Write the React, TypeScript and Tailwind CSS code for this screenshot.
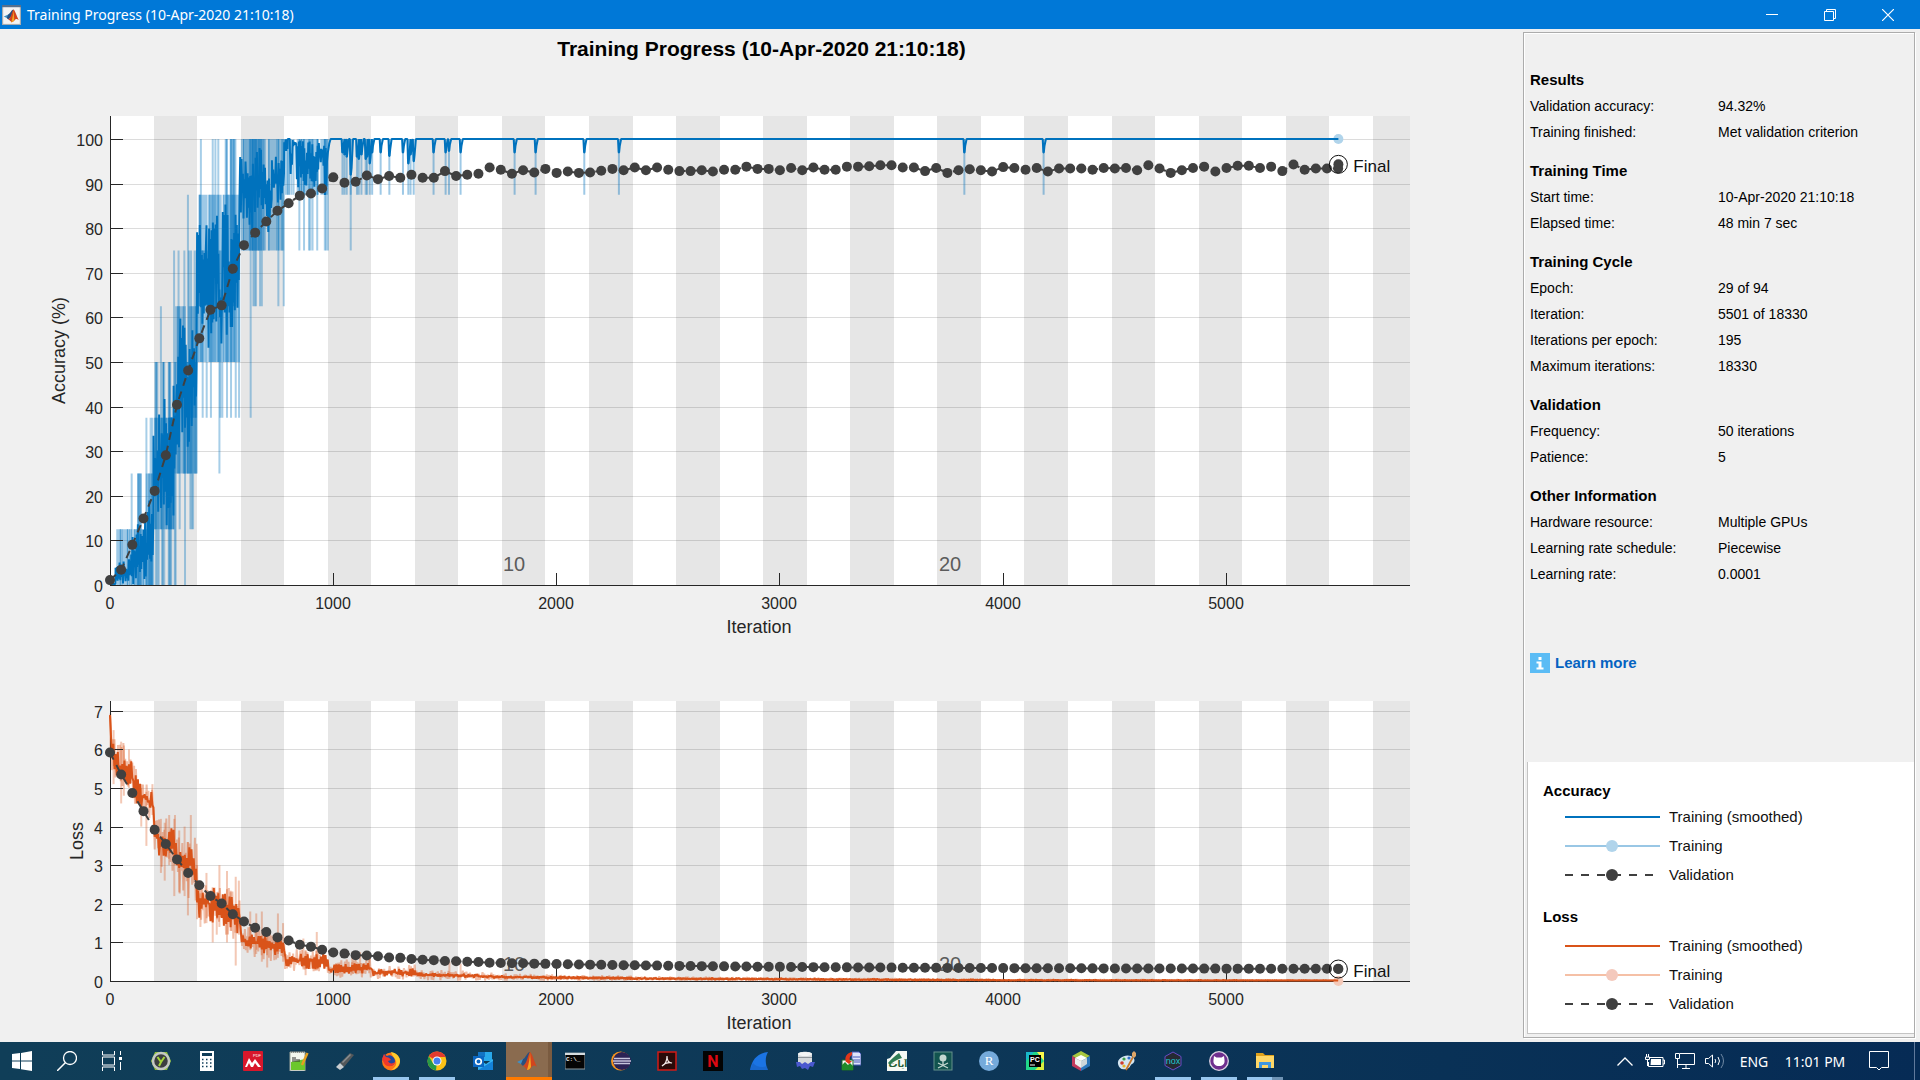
import React from "react";
import type { ReactNode } from "react";

/* ---------- chart geometry ---------- */

const LEFT = 110;
const RIGHT = 1410;
const PX_PER_ITER = 0.2233;
const EPOCH = 195;
const EPOCH_COUNT = 30;

const px = (iteration: number) => LEFT + iteration * PX_PER_ITER;

const ACC = { top: 116, bottom: 585, unit: 4.46 };
const LOSS = { top: 701, bottom: 981, unit: 38.6 };
type Scale = typeof ACC;
const py = (s: Scale, v: number) => s.bottom - v * s.unit;

const toPath = (s: Scale, pts: number[][]) =>
  pts.map(([i, v], k) => `${k ? "L" : "M"}${px(i).toFixed(1)} ${py(s, v).toFixed(1)}`).join("");

const seeded = (seed: number) => () => {
  seed = (seed * 1664525 + 1013904223) % 4294967296;
  return seed / 4294967296;
};

/* ---------- accuracy data ---------- */

const VAL_ACC = [
  1.1, 3.4, 9, 14.9, 21.1, 29.1, 40.4, 48.1, 55.3, 61.7, 62.7, 70.9, 76.2, 79, 81.5, 83.9, 85.6, 87.3, 87.8, 88.9,
  91.4, 90.2, 90.4, 91.8, 91, 91.7, 91.3, 92, 91.3, 91.3, 92.8, 91.7, 92, 92.2, 93.6, 93.1, 92.2, 93, 92.5, 93.3,
  92.4, 92.7, 92.4, 92.5, 92.9, 93.3, 93, 93.6, 93, 93.6, 93.1, 92.8, 92.8, 93, 92.7, 93.1, 93.1, 93.8, 93.3, 93.3,
  93, 93.5, 93, 93.6, 93.1, 93.1, 93.8, 93.8, 93.9, 94.1, 94.1, 93.6, 93.6, 92.8, 93.5, 92.4, 93, 93.2, 93, 92.7,
  93.7, 93.5, 93.1, 93.5, 92.7, 93.4, 93.4, 93.4, 93.1, 93.5, 93.4, 93.5, 93, 94.1, 93.4, 92.4, 93, 93.5, 93.8, 92.7,
  93.5, 94, 94, 93.5, 93.8, 92.8, 94.3, 93.1, 93.4, 93.4, 93.4,
];

/* [first iteration, last iteration, low, high] of the raw mini-batch accuracy */
const RAW_BANDS = [
  [28, 100, 0, 12.5], [104, 195, 0, 12.5], [122, 142, 0, 25], [160, 195, 0, 25], [197, 290, 12.5, 37.5],
  [203, 212, 25, 50], [236, 243, 25, 50], [261, 272, 25, 50], [258, 286, 12.5, 37.5], [292, 340, 25, 62.5],
  [330, 390, 25, 50], [352, 390, 37.5, 62.5], [392, 432, 50, 75], [396, 436, 62.5, 87.5], [438, 500, 50, 87.5],
  [505, 583, 50, 87.5], [518, 528, 62.5, 100], [536, 566, 62.5, 100], [586, 700, 75, 100], [620, 682, 75, 100],
  [706, 780, 75, 100], [784, 806, 87.5, 100], [836, 935, 87.5, 100], [942, 976, 87.5, 100],
];

/* [iteration, low, high] of single mini-batches */
const RAW_SPIKES = [
  [97, 0, 25], [127, 0, 25], [137, 0, 25], [163, 0, 37.5], [182, 0, 37.5], [190, 0, 37.5], [203, 12.5, 50],
  [212, 0, 50], [228, 12.5, 62.5], [236, 0, 50], [243, 0, 50], [263, 0, 50], [270, 0, 50], [205, 0, 37.5],
  [218, 0, 37.5], [234, 0, 37.5], [266, 0, 37.5], [274, 0, 37.5], [290, 0, 50], [294, 0, 50], [287, 25, 75],
  [307, 25, 75], [333, 25, 75], [354, 25, 75], [363, 25, 75], [379, 25, 75], [388, 25, 75], [349, 25, 87.5],
  [312, 12.5, 50], [360, 12.5, 50], [366, 12.5, 50], [372, 12.5, 50], [336, 0, 50], [407, 50, 100], [460, 50, 100],
  [472, 50, 100], [485, 50, 100], [518, 50, 100], [542, 50, 100], [556, 50, 100], [415, 37.5, 75], [433, 37.5, 75],
  [452, 37.5, 75], [494, 37.5, 75], [503, 37.5, 75], [524, 37.5, 75], [542, 37.5, 75], [563, 37.5, 75],
  [578, 37.5, 75], [490, 25, 75], [630, 37.5, 100], [642, 62.5, 100], [648, 62.5, 100], [654, 62.5, 100],
  [672, 62.5, 100], [680, 62.5, 100], [754, 62.5, 100], [778, 62.5, 100], [812, 87.5, 100], [822, 87.5, 100],
  [848, 75, 100], [869, 75, 100], [891, 75, 100], [897, 75, 100], [907, 75, 100], [928, 75, 100], [962, 75, 100],
  [968, 75, 100], [976, 75, 100], [1078, 75, 100],
];

/* late dips to 87.5 %, each with the depth that the smoothed line reaches */
const DIPS = [
  [1041, 97], [1050, 96.5], [1060, 96], [1078, 92], [1106, 96], [1114, 95.5], [1126, 96.5], [1145, 95.5],
  [1151, 96], [1163, 94.5], [1174, 97], [1212, 97], [1251, 96.2], [1312, 97], [1336, 94.5], [1346, 96.5],
  [1360, 95], [1449, 97], [1503, 97], [1518, 97.3], [1570, 97], [1812, 97], [1906, 97], [2124, 97], [2279, 97],
  [3826, 97], [4181, 97],
];

/* [first, last, low, high] range of the smoothed accuracy */
const SMOOTH_RANGES = [
  [0, 25, 0, 0.5], [25, 95, 0, 6], [95, 125, 0, 12], [125, 145, 0, 14], [145, 170, 1, 16], [170, 195, 5, 19],
  [195, 220, 15, 36], [220, 245, 14, 42], [245, 285, 13, 38], [285, 300, 20, 50], [300, 315, 24, 56],
  [315, 345, 33, 61], [345, 370, 31, 58], [370, 390, 37, 55], [390, 405, 59, 87], [405, 432, 56, 78],
  [432, 455, 52, 84], [455, 490, 58, 83], [490, 505, 48, 75], [505, 520, 60, 88], [520, 550, 56, 83],
  [550, 583, 60, 87], [583, 610, 82, 98], [610, 640, 78, 94], [640, 700, 82, 98], [700, 725, 77, 94],
  [725, 780, 84, 98], [780, 796, 97, 100], [796, 806, 100, 100], [806, 818, 92, 98], [818, 834, 98, 100],
  [834, 935, 89, 100], [935, 960, 94, 100], [960, 974, 87, 98],
];

const buildSmoothAcc = () => {
  const rnd = seeded(11);
  const pts: number[][] = [];
  SMOOTH_RANGES.forEach(([a, b, lo, hi]) => {
    for (let i = a, k = 0; i < b; i += 3, k++) {
      const part = k % 2 ? rnd() * 0.45 : 0.55 + rnd() * 0.45;
      pts.push([i, lo + (hi - lo) * part]);
    }
  });
  pts.push([976, 97], [982, 99], [988, 100]);
  DIPS.forEach(([i, v]) => pts.push([i - 4, 100], [i - 1, v], [i + 1, v], [i + 4, v + 1.5], [i + 10, 100]));
  pts.push([5501, 100]);
  return pts.filter((p, k) => k === 0 || p[0] >= pts[k - 1][0]);
};

/* ---------- loss data ---------- */

const VAL_LOSS = [
  5.92, 5.35, 4.87, 4.4, 3.92, 3.55, 3.15, 2.8, 2.48, 2.2, 2.01, 1.73, 1.54, 1.38, 1.27, 1.13, 1.05, 0.94, 0.89,
  0.81, 0.74, 0.71, 0.67, 0.66, 0.64, 0.61, 0.6, 0.57, 0.55, 0.54, 0.52, 0.51, 0.5, 0.49, 0.475, 0.466, 0.46, 0.46,
  ...Array.from({ length: 73 }, (_, k) => 0.31 + 0.14 * Math.exp(-k / 24)),
];

/* [iteration, mean, smoothed spread, raw spread] */
const LOSS_TREND = [
  [0, 6.9, 0.05, 0.05], [8, 5.9, 0.35, 0.5], [30, 5.6, 0.35, 0.7], [70, 5.5, 0.4, 0.7], [95, 5.4, 0.4, 0.7],
  [110, 5.05, 0.4, 0.5], [140, 4.8, 0.35, 0.5], [194, 4.6, 0.35, 0.5], [196, 3.8, 0.45, 0.5], [240, 3.55, 0.45, 0.7],
  [280, 3.5, 0.5, 0.8], [310, 3, 0.5, 0.8], [350, 2.95, 0.45, 0.8], [365, 3.1, 0.5, 1], [389, 2.8, 0.4, 0.8],
  [391, 2.1, 0.45, 0.6], [430, 2.05, 0.5, 0.6], [480, 1.9, 0.45, 0.6], [584, 1.65, 0.45, 0.7],
  [586, 1.08, 0.22, 0.4], [780, 0.85, 0.28, 0.4], [782, 0.55, 0.18, 0.3], [974, 0.5, 0.24, 0.35],
  [976, 0.3, 0.12, 0.2], [1170, 0.33, 0.15, 0.3], [1172, 0.2, 0.09, 0.16], [1365, 0.23, 0.11, 0.2],
  [1367, 0.16, 0.06, 0.14], [1570, 0.14, 0.05, 0.13], [1800, 0.1, 0.04, 0.09], [2500, 0.06, 0.03, 0.06],
  [4000, 0.02, 0.02, 0.03], [5501, 0.01, 0.01, 0.02],
];

const LOSS_SPIKES = [
  [2, 5.9, 6.93], [16, 5.1, 6.5], [50, 4.6, 6.2], [62, 4.8, 6.1], [85, 5, 6], [140, 4, 5.1], [163, 3.5, 4.9],
  [190, 4.3, 5.1], [228, 2.8, 4.2], [245, 2.6, 4.1], [265, 3, 4.3], [288, 2.2, 4.2], [291, 3, 4.3], [310, 2.3, 3.9],
  [334, 2.2, 4], [349, 1.7, 3.6], [362, 2.8, 4.3], [390, 1.6, 3], [405, 1.4, 2.6], [432, 1.5, 2.8], [460, 1, 2.2],
  [478, 1.2, 2.3], [490, 1.4, 3], [524, 1, 2.85], [540, 1.3, 2.3], [563, 0.4, 2.7], [577, 1.2, 2.6], [628, 0.8, 1.8],
  [655, 0.7, 1.75], [680, 0.5, 1.8], [704, 0.35, 1.4], [752, 0.6, 1.75], [775, 0.5, 1.5], [866, 0.3, 1.1],
  [926, 0.3, 1.27], [876, 0.15, 0.8], [1085, 0.2, 0.75], [1120, 0.2, 0.75], [1160, 0.2, 0.7], [1520, 0.1, 0.5],
  [1570, 0.1, 0.45],
];

const buildLoss = (column: 2 | 3, seed: number, step: number) => {
  const rnd = seeded(seed);
  const pts: number[][] = [];
  for (let i = 0, k = 0; i <= 5500; i += step, k++) {
    let j = 1;
    while (j < LOSS_TREND.length - 1 && LOSS_TREND[j][0] < i) j++;
    const a = LOSS_TREND[j - 1];
    const b = LOSS_TREND[j];
    const t = Math.min(1, (i - a[0]) / (b[0] - a[0]));
    const mean = a[1] + (b[1] - a[1]) * t;
    const spread = a[column] + (b[column] - a[column]) * t;
    pts.push([i, Math.max(0.01, mean + (k % 2 ? 1 : -1) * spread * rnd())]);
  }
  return pts;
};

/* ---------- chart pieces ---------- */

const SANS = "font-['Liberation_Sans',Arial,sans-serif]";

function Backdrop({ s, ticks, step }: { s: Scale; ticks: number[]; step: number }) {
  return (
    <g shapeRendering="crispEdges">
      <rect x={LEFT} y={s.top} width={RIGHT - LEFT} height={s.bottom - s.top} fill="#fff" />
      {Array.from({ length: EPOCH_COUNT / 2 }, (_, k) => {
        const x = px(EPOCH * (2 * k + 1));
        return (
          <rect
            key={k}
            x={x}
            y={s.top}
            width={Math.min(px(EPOCH * (2 * k + 2)), RIGHT) - x}
            height={s.bottom - s.top}
            fill="#e6e6e6"
          />
        );
      })}
      {ticks.filter((t) => t > 0).map((t) => (
        <rect key={t} x={LEFT} y={Math.round(py(s, t * step))} width={RIGHT - LEFT} height={1} fill="#262626" fillOpacity={0.16} />
      ))}
    </g>
  );
}

function EpochLabels({ y }: { y: number }) {
  return (
    <g className={`${SANS} text-[20px]`} fill="#5c5c5c" textAnchor="middle">
      <text x={514} y={y}>10</text>
      <text x={950} y={y}>20</text>
    </g>
  );
}

function Axes({ s, ticks, step, label, labelX }: { s: Scale; ticks: number[]; step: number; label: string; labelX: number }) {
  const mid = (s.top + s.bottom) / 2;
  return (
    <g className={SANS} fill="#262626">
      <g shapeRendering="crispEdges">
        <rect x={LEFT} y={s.top} width={1} height={s.bottom - s.top} />
        <rect x={LEFT} y={s.bottom} width={RIGHT - LEFT} height={1} />
        {ticks.map((t) => (
          <rect key={t} x={LEFT} y={Math.round(py(s, t * step))} width={13} height={1} />
        ))}
        {[1, 2, 3, 4, 5].map((t) => (
          <rect key={t} x={Math.floor(px(t * 1000))} y={s.bottom - 12} width={1} height={12} />
        ))}
      </g>
      <g className="text-[16px]" textAnchor="end">
        {ticks.map((t) => (
          <text key={t} x={103} y={Math.round(py(s, t * step)) + 7}>{t * step}</text>
        ))}
      </g>
      <g className="text-[16px]" textAnchor="middle">
        {[0, 1, 2, 3, 4, 5].map((t) => (
          <text key={t} x={Math.floor(px(t * 1000))} y={s.bottom + 24}>{t * 1000}</text>
        ))}
      </g>
      <g className="text-[18px]" textAnchor="middle">
        <text x={759} y={s.bottom + 48}>Iteration</text>
        <text transform={`translate(${labelX} ${mid}) rotate(-90)`}>{label}</text>
      </g>
    </g>
  );
}

function Validation({ s, values, final }: { s: Scale; values: number[]; final: number }) {
  const fx = px(5501);
  const fy = py(s, final);
  return (
    <g>
      <path d={toPath(s, values.map((v, k) => [k * 50, v]))} fill="none" stroke="#404040" strokeWidth={2} strokeDasharray="8 6" />
      {values.map((v, k) => (
        <circle key={k} cx={px(k * 50)} cy={py(s, v)} r={5} fill="#404040" />
      ))}
      <circle cx={fx} cy={fy} r={5} fill="#404040" />
      <circle cx={fx} cy={fy} r={9} fill="none" stroke="#111" strokeWidth={1} />
      <text x={fx + 15} y={fy + 8} fill="#111" className={`${SANS} text-[17px]`}>Final</text>
    </g>
  );
}

const ACC_TICKS = [0, 1, 2, 3, 4, 5, 6, 7, 8, 9, 10];
const LOSS_TICKS = [0, 1, 2, 3, 4, 5, 6, 7];

function AccuracyChart() {
  const rnd = seeded(5);
  return (
    <svg viewBox="0 80 1523 560" className="block h-auto w-full" role="img" aria-label="Accuracy by iteration">
      <Backdrop s={ACC} ticks={ACC_TICKS} step={10} />
      <EpochLabels y={571} />
      <g fill="#0072bd">
        {RAW_BANDS.map(([a, b, lo, hi], k) => (
          <rect key={k} x={px(a)} y={py(ACC, hi)} width={(b - a) * PX_PER_ITER} height={(hi - lo) * ACC.unit} fillOpacity={0.38} />
        ))}
        {RAW_BANDS.flatMap(([a, b, lo, hi], k) =>
          Array.from({ length: Math.ceil((b - a) / 14) }, (_, j) => (
            <rect key={`${k}-${j}`} x={px(a + rnd() * (b - a - 6))} y={py(ACC, hi)} width={1} height={(hi - lo) * ACC.unit} fillOpacity={0.35} />
          )),
        )}
        {RAW_SPIKES.map(([i, lo, hi], k) => (
          <rect key={k} x={px(i) - 1} y={py(ACC, hi)} width={2} height={(hi - lo) * ACC.unit} fillOpacity={0.35} />
        ))}
        {DIPS.map(([i], k) => (
          <rect key={k} x={px(i) - 1} y={py(ACC, 100)} width={2} height={12.5 * ACC.unit} fillOpacity={0.38} />
        ))}
      </g>
      <circle cx={px(5501)} cy={py(ACC, 100)} r={5} fill="#b0d4eb" />
      <path d={toPath(ACC, buildSmoothAcc())} fill="none" stroke="#0072bd" strokeWidth={2} strokeLinejoin="bevel" />
      <Axes s={ACC} ticks={ACC_TICKS} step={10} label="Accuracy (%)" labelX={65} />
      <Validation s={ACC} values={VAL_ACC} final={94.32} />
    </svg>
  );
}

function LossChart() {
  return (
    <svg viewBox="0 640 1523 402" className="block h-auto w-full" role="img" aria-label="Loss by iteration">
      <Backdrop s={LOSS} ticks={LOSS_TICKS} step={1} />
      <EpochLabels y={971} />
      <path d={toPath(LOSS, buildLoss(3, 3, 4))} fill="none" stroke="#d95319" strokeOpacity={0.38} strokeWidth={2} strokeLinejoin="bevel" />
      <g fill="#d95319" fillOpacity={0.32}>
        {LOSS_SPIKES.map(([i, lo, hi], k) => (
          <rect key={k} x={px(i) - 1} y={py(LOSS, hi)} width={2} height={(hi - lo) * LOSS.unit} />
        ))}
      </g>
      <Axes s={LOSS} ticks={LOSS_TICKS} step={1} label="Loss" labelX={83} />
      <circle cx={px(5501)} cy={LOSS.bottom} r={5} fill="#f4c9b8" />
      <path d={toPath(LOSS, buildLoss(2, 8, 5))} fill="none" stroke="#d95319" strokeWidth={2} strokeLinejoin="bevel" />
      <Validation s={LOSS} values={VAL_LOSS} final={0.31} />
    </svg>
  );
}

/* ---------- side panel ---------- */

const SECTIONS: { title: string; rows: [string, string][] }[] = [
  { title: "Results", rows: [["Validation accuracy:", "94.32%"], ["Training finished:", "Met validation criterion"]] },
  { title: "Training Time", rows: [["Start time:", "10-Apr-2020 21:10:18"], ["Elapsed time:", "48 min 7 sec"]] },
  {
    title: "Training Cycle",
    rows: [["Epoch:", "29 of 94"], ["Iteration:", "5501 of 18330"], ["Iterations per epoch:", "195"], ["Maximum iterations:", "18330"]],
  },
  { title: "Validation", rows: [["Frequency:", "50 iterations"], ["Patience:", "5"]] },
  {
    title: "Other Information",
    rows: [["Hardware resource:", "Multiple GPUs"], ["Learning rate schedule:", "Piecewise"], ["Learning rate:", "0.0001"]],
  },
];

function Sample({ color, dot, dashed }: { color: string; dot?: string; dashed?: boolean }) {
  return (
    <svg width="95" height="14" viewBox="0 0 95 14" aria-hidden="true">
      <path d="M0 7H95" stroke={color} strokeWidth={2} strokeDasharray={dashed ? "8 8" : undefined} />
      {dot && <circle cx={47} cy={7} r={6} fill={dot} />}
    </svg>
  );
}

function LegendRow({ text, tall, children }: { text: string; tall?: boolean; children: ReactNode }) {
  return (
    <li className={`flex items-center gap-[9px] pl-[22px] ${tall ? "h-8" : "h-[26px]"}`}>
      {children}
      <span>{text}</span>
    </li>
  );
}

function Legend() {
  return (
    <div className="mt-auto mb-[3px] ml-[3px] border-b border-l border-[#c4c4c4] bg-white pt-4 pb-[13px] pl-[15px] text-[15px] text-[#111]">
      <h2 className="leading-[26px] font-bold text-black">Accuracy</h2>
      <ul>
        <LegendRow text="Training (smoothed)"><Sample color="#0072bd" /></LegendRow>
        <LegendRow text="Training" tall><Sample color="#99c7e5" dot="#b0d4eb" /></LegendRow>
        <LegendRow text="Validation"><Sample color="#404040" dot="#404040" dashed /></LegendRow>
      </ul>
      <h2 className="mt-4 leading-[26px] font-bold text-black">Loss</h2>
      <ul>
        <LegendRow text="Training (smoothed)" tall><Sample color="#d95319" /></LegendRow>
        <LegendRow text="Training"><Sample color="#f5c0a6" dot="#f4c9bc" /></LegendRow>
        <LegendRow text="Validation" tall><Sample color="#404040" dot="#404040" dashed /></LegendRow>
      </ul>
    </div>
  );
}

function SidePanel() {
  return (
    <aside className="mt-[3px] mr-[5px] mb-1 flex w-[392px] shrink-0 flex-col border border-[#acacac] shadow-[inset_1px_1px_0_#fff,1px_1px_0_#fff]">
      <div className="flex flex-col gap-[13px] pt-[34px] pl-[6px] text-[14px] text-black">
        {SECTIONS.map((s) => (
          <section key={s.title}>
            <h2 className="text-[15px] leading-[26px] font-bold">{s.title}</h2>
            <dl className="grid grid-cols-[188px_1fr] leading-[26px]">
              {s.rows.map(([k, v]) => (
                <React.Fragment key={k}>
                  <dt>{k}</dt>
                  <dd>{v}</dd>
                </React.Fragment>
              ))}
            </dl>
          </section>
        ))}
      </div>
      <a href="#learn" className="mt-16 ml-[6px] flex items-center gap-[5px] self-start text-[15px] leading-6 font-bold text-[#0563c1]">
        <svg width="20" height="20" viewBox="0 0 20 20" aria-hidden="true">
          <rect width="20" height="20" fill="#5bbcf5" />
          <path d="M8.500 4h3v3h-3zM6.500 8.500H11.500V14.500H13.500V16.500H6.500V14.500H8.500V10.500H6.500z" fill="#fff" />
        </svg>
        Learn more
      </a>
      <Legend />
    </aside>
  );
}

/* ---------- taskbar ---------- */

function Icon({ children, size = 20 }: { children: ReactNode; size?: number }) {
  return <svg width={size} height={size} viewBox="0 0 20 20" aria-hidden="true">{children}</svg>;
}

const MatlabMark = () => (
  <>
    <path d="M0 11l6-3 4-3 2 4-6 5z" fill="#3f8fc4" />
    <path d="M6 8c3-1 4-7 7-7l-2 9-5 5-2-2z" fill="#2b4f7d" />
    <path d="M13 1c2 1 4 9 7 15-3-2-4-2-6 1-2 2-3 2-4 2-1-2-2-3-4-4 4-2 5-12 7-14z" fill="#d2451e" />
    <path d="M13 1c0 5-1 11-3 18 2 0 3-1 4-3z" fill="#f5a623" />
  </>
);

type App = { name: string; state?: "open" | "active" | "stacked"; art: ReactNode };

const APPS: App[] = [
  {
    name: "Yubico",
    art: (
      <>
        <path d="M4 1h12l4 9-4 9H4l-4-9z" fill="#8fbf3c" />
        <circle cx="10" cy="10" r="8" fill="#3c3f40" stroke="#c4c8c4" strokeWidth="2.500" />
        <path d="M6.500 6l3.500 5 3.500-5M10 11l-2 4" stroke="#a5d63a" strokeWidth="2" fill="none" />
      </>
    ),
  },
  {
    name: "Calculator",
    art: (
      <>
        <path d="M3 0h14v20H3z" fill="#fff" />
        <path d="M5 2h10v3H5z" fill="#0f3c58" />
        <path d="M5 8.500h10M5 12h10M5 15.500h10" stroke="#0f3c58" strokeWidth="1.500" strokeDasharray="1.500 2.500" />
      </>
    ),
  },
  {
    name: "PDF editor",
    art: (
      <>
        <rect width="20" height="20" rx="1" fill="#d8172b" />
        <path d="M2 16l4-9 3 5 3-4 6 8h-3l-3-4-2 4H8l-2-4-2 4z" fill="#fff" />
        <text x="10" y="6" fontSize="4" fill="#fff" fontFamily="Liberation Sans">PDF</text>
      </>
    ),
  },
  {
    name: "Notepad++",
    art: (
      <>
        <path d="M1 1h15v19H1z" fill="#f4f7ee" stroke="#9aa39a" />
        <path d="M2 11l14-3v11H2z" fill="#6cc72c" />
        <path d="M4 6v5M6 6v5M8 8v3M10 8v3" stroke="#333" />
        <path d="M18.500 2L13 14" stroke="#e4a021" strokeWidth="2.500" />
        <path d="M2 1h13" stroke="#555" strokeDasharray="1 1" />
      </>
    ),
  },
  {
    name: "USB tool",
    art: (
      <>
        <path d="M5 12L15 2l4 2-10 12z" fill="#55585a" />
        <path d="M1 16l4-4 4 4-4 3z" fill="#c9cdd0" />
        <path d="M7 11l8-8 1 1-8 8z" fill="#8b8f92" />
      </>
    ),
  },
  {
    name: "Firefox",
    state: "open",
    art: (
      <>
        <circle cx="10" cy="10.500" r="9" fill="#ff7417" />
        <path d="M10 1c6 1 9 5 9 9s-4 9-9 9c4-2 6-5 5-9-1-3-4-5-5-9z" fill="#ffcb2d" />
        <path d="M1 8l2-5 3 2c3-2 8 1 8 5s-4 6-7 4l3-1c-3 0-4-3-3-5z" fill="#20479e" />
        <path d="M1 8l2-5 2 3c2 0 4 1 5 3l-3 1c1 3 5 3 7 1-1 5-9 6-11 1z" fill="#f0382b" />
      </>
    ),
  },
  {
    name: "Chrome",
    state: "open",
    art: (
      <>
        <circle cx="10" cy="10" r="9.500" fill="#fbc117" />
        <path d="M10 10L1.800 5.200A9.500 9.500 0 0 1 18.700 6H10z" fill="#e33b2e" />
        <path d="M10 10l-1 9.500A9.500 9.500 0 0 1 1.800 5.200l4.500 7.500z" fill="#269a46" />
        <circle cx="10" cy="10" r="4.500" fill="#fff" />
        <circle cx="10" cy="10" r="3.500" fill="#4480ef" />
      </>
    ),
  },
  {
    name: "Outlook",
    art: (
      <>
        <path d="M5 1h14v9H5z" fill="#28a8ea" />
        <path d="M5 1h7v5H5z" fill="#1273c4" />
        <path d="M5 8l8 5 7-5v11H5z" fill="#37b4f2" />
        <path d="M5 19l15-9v9z" fill="#1482d8" />
        <path d="M0 5h11v11H0z" fill="#0b66c2" />
        <circle cx="5.500" cy="10.500" r="2.800" fill="none" stroke="#fff" strokeWidth="1.600" />
      </>
    ),
  },
  { name: "MATLAB", state: "active", art: <MatlabMark /> },
  {
    name: "Command Prompt",
    art: (
      <>
        <path d="M0 2h20v16H0z" fill="#050505" stroke="#8d9aa0" />
        <path d="M0 2h20v2H0z" fill="#d5dcdf" />
        <text x="1" y="10" fontSize="6" fontWeight="bold" fill="#eee" fontFamily="Liberation Mono">C:\_</text>
      </>
    ),
  },
  {
    name: "Eclipse",
    art: (
      <>
        <circle cx="9.500" cy="10" r="9.500" fill="#f7941e" />
        <circle cx="11" cy="10" r="9" fill="#2c2255" />
        <path d="M3 7.500h16M2 10h18M3 12.500h16" stroke="#c7c5dd" strokeWidth="1.300" />
      </>
    ),
  },
  {
    name: "Acrobat",
    art: (
      <>
        <rect x="1" y="1" width="18" height="18" fill="#2a0b0a" stroke="#d11b17" strokeWidth="1.500" />
        <path d="M5 15c4-2 5-6 5-10 0 5 2 7 5 7-4-1-7 0-10 3z" fill="none" stroke="#f3e9e8" strokeWidth="1.200" />
      </>
    ),
  },
  {
    name: "Netflix",
    art: (
      <>
        <rect width="20" height="20" fill="#030303" />
        <text x="10" y="16" textAnchor="middle" fontSize="16" fontWeight="bold" fill="#dc0812" fontFamily="Roboto">N</text>
      </>
    ),
  },
  {
    name: "Wireshark",
    art: (
      <>
        <path d="M1 19C3 8 9 2 19 1c-3 5-3 12 0 18z" fill="#1b74e4" />
        <path d="M1 19c1-3 2-5 3-7 3 4 9 5 14 3l1 4z" fill="#1558b0" fillOpacity=".4" />
      </>
    ),
  },
  {
    name: "Disk tool",
    art: (
      <>
        <path d="M3 3c0-3 14-3 14 0v10H3z" fill="#d5d9dc" />
        <ellipse cx="10" cy="3" rx="7" ry="2" fill="#f3f5f6" />
        <path d="M3 6.500h14" stroke="#8e959b" />
        <path d="M1 11h4l2 2 3-2 3 2 3-2h4l-2 5-3-1-2 4-3-2-3 1-2-3-3 1z" fill="#4a58cf" />
      </>
    ),
  },
  {
    name: "Image converter",
    art: (
      <>
        <path d="M11 1h7l2 2v11h-9z" fill="#dfe4fb" stroke="#4a5ab8" />
        <path d="M12 6h7M12 9h7M13 11h6" stroke="#4a5ab8" />
        <path d="M1 9h11v10H1z" fill="#f7fbf7" stroke="#1d6b24" />
        <path d="M1 19v-5l3-3 3 3 2-2 3 3v4z" fill="#1f8a2a" />
        <path d="M5 11c-2-5 1-9 6-10v3c-2 1-3 3-2 6l2 0-3 3-4-3z" fill="#e0361a" />
      </>
    ),
  },
  {
    name: "Ayat",
    art: (
      <>
        <rect width="20" height="20" fill="#f5f8f4" />
        <path d="M0 0h9L3 7 0 8z" fill="#0f3c58" />
        <path d="M1 12C4 8 8 5 12 2l3 5c-4 1-8 3-12 7z" fill="#2f7d55" />
        <text x="11" y="16" textAnchor="middle" fontSize="9" fontWeight="bold" fill="#215c33" fontFamily="DejaVu Sans">آيات</text>
      </>
    ),
  },
  {
    name: "Services",
    art: (
      <>
        <rect x="1" y="1" width="18" height="18" fill="#12544f" stroke="#64918c" />
        <circle cx="10" cy="7" r="3.500" fill="#c3d6d0" />
        <path d="M10 9v5M5 12l10 5M15 12L5 17" stroke="#c3d6d0" strokeWidth="1.300" />
      </>
    ),
  },
  {
    name: "R",
    art: (
      <>
        <circle cx="10" cy="10" r="10" fill="#75aadb" />
        <text x="10" y="14" textAnchor="middle" fontSize="13" fill="#fff" fontFamily="Liberation Serif">R</text>
      </>
    ),
  },
  {
    name: "PyCharm",
    art: (
      <>
        <path d="M1 1h18v18H1z" fill="#21d789" />
        <path d="M12 1h7v9z" fill="#fcf84a" />
        <path d="M19 10v9h-9z" fill="#d7ee3c" />
        <path d="M1 1h8L1 10z" fill="#18b8c9" />
        <path d="M4 4h12v12H4z" fill="#000" />
        <text x="5" y="11" fontSize="7" fontWeight="bold" fill="#fff" fontFamily="Liberation Sans">PC</text>
        <path d="M5 14h5" stroke="#fff" />
      </>
    ),
  },
  {
    name: "NetBeans",
    art: (
      <>
        <path d="M10 0l9 5-9 5-9-5z" fill="#a8c740" />
        <path d="M1 5l9 5v10l-9-5z" fill="#c23a5d" />
        <path d="M19 5l-9 5v10l9-5z" fill="#2d78bd" />
        <path d="M10 4l6 3-6 3-6-3z" fill="#fff" />
        <path d="M4 7l6 3v7l-6-4z" fill="#eceff0" />
        <path d="M16 7l-6 3v7l6-4z" fill="#cdd6da" />
      </>
    ),
  },
  {
    name: "Paint",
    art: (
      <>
        <path d="M1 13C0 7 8 3 14 5c5 2 4 7 1 8-2 1-2 5-6 5-5 1-7-1-8-5z" fill="#d5e6f2" />
        <circle cx="5" cy="12" r="1.800" fill="#cf3b2e" />
        <circle cx="7" cy="8" r="1.600" fill="#3b9e47" />
        <circle cx="12" cy="7" r="1.600" fill="#2f6fcc" />
        <circle cx="7" cy="15" r="1.600" fill="#e8b52c" />
        <path d="M16 6L9 19" stroke="#c8782c" strokeWidth="1.800" />
        <path d="M15 2l2-2 2 2v3l-2 2-2-2z" fill="#dfa668" />
      </>
    ),
  },
  {
    name: "Nox",
    state: "open",
    art: (
      <>
        <path d="M10 1l8 4.500v9L10 19l-8-4.500v-9z" fill="#252a32" stroke="#6a4bc4" />
        <text x="10" y="13" textAnchor="middle" fontSize="9" fill="#1fc5d0" fontFamily="Liberation Sans">nox</text>
      </>
    ),
  },
  {
    name: "GitHub Desktop",
    state: "open",
    art: (
      <>
        <circle cx="10" cy="10" r="9.300" fill="#6f2f8e" stroke="#dcd3e3" strokeWidth="1.300" />
        <path d="M5 5l2.500 1.500h5L15 5l.5 4c.5 4-2 6-5.500 6s-6-2-5.500-6z" fill="#fff" />
      </>
    ),
  },
  {
    name: "File Explorer",
    state: "stacked",
    art: (
      <>
        <path d="M1 2h7l2 2h9v4H1z" fill="#e0a21c" />
        <path d="M1 5h18v12H1z" fill="#ffd766" />
        <path d="M4 17v-6h12v6h-3v-3H7v3z" fill="#3f97e0" />
      </>
    ),
  },
];

function TaskButton({ app }: { app: App }) {
  const active = app.state === "active";
  return (
    <button
      type="button"
      aria-label={app.name}
      className={`relative flex h-full w-[46px] shrink-0 items-center justify-center ${active ? "border-r-4 border-[#7a5b40] bg-[#8a6b4f]" : ""}`}
    >
      <Icon>{app.art}</Icon>
      {active && <span className="absolute -right-1 bottom-0 left-0 h-[3px] bg-[#ff7a00]" />}
      {(app.state === "open" || app.state === "stacked") && (
        <span className="absolute bottom-0 left-[5px] flex h-[3px] w-9 bg-[#98c6ee]">
          {app.state === "stacked" && <span className="ml-auto w-[11px] bg-[#6f93b4]" />}
        </span>
      )}
    </button>
  );
}

function Taskbar() {
  return (
    <footer className="flex h-[38px] shrink-0 items-stretch bg-linear-to-r from-[#103e58] via-[#0d3757] to-[#062b55] text-white">
      <button type="button" aria-label="Start" className="flex w-11 items-center justify-center">
        <Icon>
          <path d="M0 3l8-1v7.500H0zM9 1.900L20 0v9.500H9zM0 10.500h8V18l-8-1zM9 10.500h11V20L9 18.200z" fill="#fff" />
        </Icon>
      </button>
      <button type="button" aria-label="Search" className="flex w-[46px] items-center justify-center">
        <Icon>
          <circle cx="13" cy="7" r="6.500" fill="none" stroke="#fff" strokeWidth="1.300" />
          <path d="M8.500 11.500L0 20" stroke="#fff" strokeWidth="1.500" />
        </Icon>
      </button>
      <button type="button" aria-label="Task View" className="mr-1 flex w-11 items-center justify-center">
        <Icon>
          <path d="M.5 0v4h12V0M.5 20v-4h12v4M.5 6h12v8H.5zM18.500 0v4M18.500 11v8" fill="none" stroke="#fff" />
          <path d="M17 6h3v3h-3z" fill="#fff" />
        </Icon>
      </button>
      {APPS.map((a) => (
        <TaskButton key={a.name} app={a} />
      ))}
      <div className="ml-auto flex items-center font-['Noto_Sans','Open_Sans',sans-serif] text-[14px]">
        <button type="button" aria-label="Show hidden icons" className="flex w-[30px] justify-center">
          <svg width="16" height="9" viewBox="0 0 16 9"><path d="M.5 8.500L8 1l7.500 7.500" fill="none" stroke="#fff" strokeWidth="1.300" /></svg>
        </button>
        <button type="button" aria-label="Battery" className="flex w-[30px] justify-center">
          <svg width="20" height="14" viewBox="0 0 20 14">
            <path d="M5 3.500h13v9H3.500V8M18 6h1.500v4H18" fill="none" stroke="#fff" />
            <path d="M6 5h10v6H5.500z" fill="#fff" />
            <path d="M1.500 0v3M3.500 0v3M.5 3h4v2.500h-4zM2.500 5v7" stroke="#fff" fill="none" />
          </svg>
        </button>
        <button type="button" aria-label="Network" className="flex w-[30px] justify-center">
          <svg width="20" height="16" viewBox="0 0 20 16">
            <path d="M5 .5h14.500v11H3M.5.5h4v5h-4zM2.500 5.500V15M11 12v3M7 15.500h8" fill="none" stroke="#fff" />
          </svg>
        </button>
        <button type="button" aria-label="Volume" className="flex w-[30px] justify-center">
          <svg width="20" height="18" viewBox="0 0 20 18">
            <path d="M.5 6.500h3L7.500 3v12l-4-3.500h-3z" fill="none" stroke="#fff" />
            <path d="M10 7q1.500 2 0 4M13 5q3 4 0 8" fill="none" stroke="#fff" />
            <path d="M16 2q5 7 0 14" fill="none" stroke="#7089a4" />
          </svg>
        </button>
        <button type="button" className="w-12 text-center">ENG</button>
        <time className="w-[74px] text-center">11:01 PM</time>
        <button type="button" aria-label="Notifications" className="mr-[25px] ml-[17px]">
          <svg className="block" width="20" height="20" viewBox="0 0 20 20"><path d="M.5.5h19v16h-7L10 19l-2.500-2.500h-7z" fill="none" stroke="#fff" /></svg>
        </button>
        <span className="h-full w-[6px] border-l border-[#60799b]" />
      </div>
    </footer>
  );
}

/* ---------- window ---------- */

function TitleBar() {
  return (
    <header className="flex h-[29px] shrink-0 items-center bg-[#0078d7] text-white">
      <svg className="ml-[2px]" width="19" height="20" viewBox="0 0 16 18" preserveAspectRatio="none" aria-hidden="true">
        <rect x=".5" y=".5" width="15" height="17" fill="#f4f4f4" stroke="#a8acb0" />
        <path d="M0 0h16v2H0z" fill="#58708c" />
        <g transform="translate(1.500 3.500) scale(.63)"><MatlabMark /></g>
      </svg>
      <span className="ml-[6px] font-['Noto_Sans','Open_Sans',sans-serif] text-[14px]">Training Progress (10-Apr-2020 21:10:18)</span>
      <div className="ml-auto flex h-full">
        <button type="button" aria-label="Minimize" className="flex w-[58px] items-center justify-center">
          <svg width="12" height="12" viewBox="0 0 12 12"><path d="M0 5.500h12" stroke="#fff" /></svg>
        </button>
        <button type="button" aria-label="Restore" className="flex w-[58px] items-center justify-center">
          <svg width="12" height="12" viewBox="0 0 12 12"><path d="M.5 2.500h9v9h-9zM2.500 2.500v-2h9v9h-2" fill="none" stroke="#fff" /></svg>
        </button>
        <button type="button" aria-label="Close" className="mr-[3px] flex w-[58px] items-center justify-center">
          <svg width="12" height="12" viewBox="0 0 12 12"><path d="M0 0l12 12M12 0L0 12" stroke="#fff" strokeWidth="1.200" /></svg>
        </button>
      </div>
    </header>
  );
}

export default function App() {
  return (
    <div className="flex min-h-screen flex-col bg-[#f0f0f0] font-['Liberation_Sans',Arial,sans-serif]">
      <TitleBar />
      <main className="flex flex-1">
        <div className="min-w-0 flex-1">
          <h1 className="pt-[6px] pb-[17px] text-center text-[21px] leading-7 font-bold text-black">
            Training Progress (10-Apr-2020 21:10:18)
          </h1>
          <AccuracyChart />
          <LossChart />
        </div>
        <SidePanel />
      </main>
      <Taskbar />
    </div>
  );
}
